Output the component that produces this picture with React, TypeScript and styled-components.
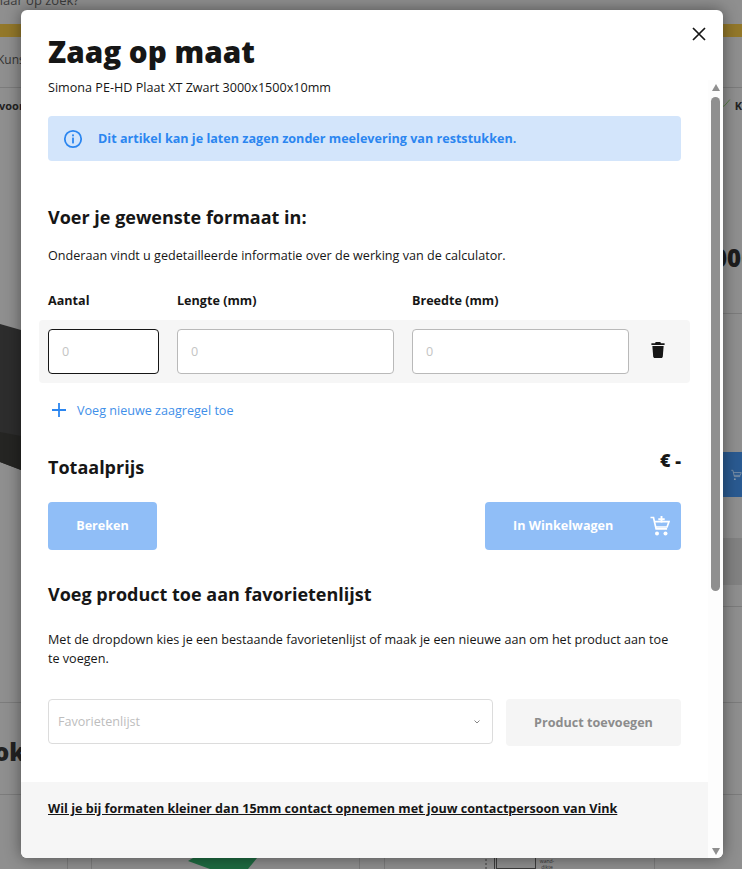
import { createGlobalStyle, styled } from "styled-components";

const GlobalStyle = createGlobalStyle`
  html, body {
    margin: 0;
    padding: 0;
    height: 100%;
    overflow: hidden;
  }
  body {
    font-family: "Open Sans", "Liberation Sans", sans-serif;
    color: #161616;
  }
`;

export default function App() {
  return (
    <>
      <GlobalStyle />
      <Page>
        <BackPage />
        <Modal>
          <Header>
            <Title>Zaag op maat</Title>
            <Subtitle>Simona PE-HD Plaat XT Zwart 3000x1500x10mm</Subtitle>
            <CloseBtn aria-label="Sluiten">
              <svg width="14" height="14" viewBox="0 0 14 14">
                <path d="M1 1l12 12M13 1L1 13" stroke="#161616" strokeWidth="1.7" />
              </svg>
            </CloseBtn>
          </Header>
          <Scroller>
            <Content>
              <InfoBox>
                <svg width="20" height="20" viewBox="0 0 20 20" fill="none">
                  <circle cx="10" cy="10" r="8.2" stroke="#2b86f0" strokeWidth="1.8" />
                  <rect x="9.1" y="8.6" width="1.8" height="5.8" fill="#2b86f0" />
                  <rect x="9.1" y="5.4" width="1.8" height="1.9" fill="#2b86f0" />
                </svg>
                <InfoText>Dit artikel kan je laten zagen zonder meelevering van reststukken.</InfoText>
              </InfoBox>
              <FormatTitle>Voer je gewenste formaat in:</FormatTitle>
              <Paragraph>Onderaan vindt u gedetailleerde informatie over de werking van de calculator.</Paragraph>
              <LabelRow>
                <Label $w={129}>Aantal</Label>
                <Label $w={235}>Lengte (mm)</Label>
                <Label $w={200}>Breedte (mm)</Label>
              </LabelRow>
              <SawRow>
                <Field $w={111} $active placeholder="0" />
                <Field $w={217} placeholder="0" />
                <Field $w={217} placeholder="0" />
                <TrashBtn aria-label="Verwijderen">
                  <svg width="14" height="16" viewBox="0 0 14 17">
                    <path d="M4.5 0h5l.6 1.2H14v1.9H0V1.2h3.9z" fill="#161616" />
                    <path d="M1 4.2h12L12.1 15.4c-.1.9-.7 1.6-1.6 1.6h-7c-.9 0-1.5-.7-1.6-1.6z" fill="#161616" />
                  </svg>
                </TrashBtn>
              </SawRow>
              <AddLine>
                <svg width="14" height="14" viewBox="0 0 14 14">
                  <path d="M7 0v14M0 7h14" stroke="#2b86f0" strokeWidth="1.8" />
                </svg>
                <AddText>Voeg nieuwe zaagregel toe</AddText>
              </AddLine>
              <TotalRow>
                <TotalLabel>Totaalprijs</TotalLabel>
                <TotalPrice>€ -</TotalPrice>
              </TotalRow>
              <ButtonRow>
                <BlueButton $w={109}>Bereken</BlueButton>
                <CartButton>
                  <span>In Winkelwagen</span>
                  <svg width="20" height="20" viewBox="0 0 20 20" fill="none">
                    <path d="M0.5 1.5h3l2.6 11.4h11" stroke="#fff" strokeWidth="1.7" />
                    <path d="M4.6 5.6h14.400l-1.900 5.400H5.700" stroke="#fff" strokeWidth="1.7" />
                    <path d="M11.500 0v6.500M8.300 3.200h6.400" stroke="#fff" strokeWidth="1.9" />
                    <circle cx="7" cy="17.500" r="2" fill="#fff" />
                    <circle cx="15.500" cy="17.500" r="2" fill="#fff" />
                  </svg>
                </CartButton>
              </ButtonRow>
              <FavTitle>Voeg product toe aan favorietenlijst</FavTitle>
              <FavParagraph>
                Met de dropdown kies je een bestaande favorietenlijst of maak je een nieuwe aan om het product aan toe te voegen.
              </FavParagraph>
              <FavRow>
                <SelectBox>
                  <SelectText>Favorietenlijst</SelectText>
                  <svg width="6" height="4" viewBox="0 0 6 4" fill="none">
                    <path d="M.5.5L3 3 5.500.5" stroke="#777" strokeWidth="0.9" />
                  </svg>
                </SelectBox>
                <GreyButton>Product toevoegen</GreyButton>
              </FavRow>
            </Content>
            <Footer>
              <FooterLink>Wil je bij formaten kleiner dan 15mm contact opnemen met jouw contactpersoon van Vink</FooterLink>
            </Footer>
          </Scroller>
          <ScrollTrack>
            <ArrowUp />
            <Thumb />
            <ArrowDown />
          </ScrollTrack>
        </Modal>
      </Page>
    </>
  );
}

// the dimmed shop page behind the dialog, only its edges show
function BackPage() {
  return (
    <Behind>
      <SearchRow>
        <BackSearch>naar op zoek?</BackSearch>
      </SearchRow>
      <GoldBar />
      <NavRow>
        <BackNav>Kunst</BackNav>
      </NavRow>
      <BackColumns>
        <BackLeft>
          <BackUsp>voor</BackUsp>
          <svg width="21" height="170" viewBox="0 0 21 170">
            <polygon points="0,0 21,6 21,146 0,138" fill="#2d2d2d" />
            <polygon points="0,108 21,112 21,146 0,138" fill="#252523" />
          </svg>
        </BackLeft>
        <BackRight>
          <UspRight>
            <svg width="9" height="10" viewBox="0 0 9 10">
              <path d="M0 9l2-1 6-7" stroke="#4d7a3a" strokeWidth="1" fill="none" />
            </svg>
            <BackK>K</BackK>
          </UspRight>
          <PriceCell>
            <BackBig>000</BackBig>
          </PriceCell>
          <BuyCell>
            <BackBlue>
              <svg width="18" height="18" viewBox="0 0 20 20" fill="none">
                <path d="M0.500 1.500h3l2.600 11.400h10.600M4.600 5.600h14l-1.700 5H5.700" stroke="#8a9aab" strokeWidth="1.400" />
                <circle cx="7" cy="17.500" r="1.800" fill="#8a9aab" />
              </svg>
            </BackBlue>
            <BackBand />
          </BuyCell>
        </BackRight>
      </BackColumns>
      <HeadingRow>
        <BackHeading>ok</BackHeading>
      </HeadingRow>
      <BackGap />
      <BottomRow>
        <BottomCell $w={67} $plain />
        <BottomCell $w={24} />
        <BottomCell $w={268}>
          <GreenShape width="70" height="11" viewBox="0 0 70 11">
            <polygon points="0,3 5,0 69,0 60,11 22,11" fill="#1e6b41" />
          </GreenShape>
        </BottomCell>
        <BottomCell $w={25} />
        <BottomCell $w={270}>
          <DrawingWrap>
            <svg width="51" height="11" viewBox="0 0 51 11" fill="none">
              <path d="M1 1v2M1 5v2M1 9v2M9.500 0v11M11.500 0v11M12 10.500h38M50.500 0v11" stroke="#3c3c3c" />
            </svg>
            <DrawingNote>wand-<br />dikte</DrawingNote>
          </DrawingWrap>
        </BottomCell>
        <BottomCell $w={88} />
      </BottomRow>
    </Behind>
  );
}

const Page = styled.div`
  position: relative;
  width: 742px;
  height: 869px;
  overflow: hidden;
  padding: 10px 19px 11px 21px;
  box-sizing: border-box;
`;

const Behind = styled.div`
  position: absolute;
  inset: 0;
  display: flex;
  flex-direction: column;
  background: #8f8f8f;
  overflow: hidden;
`;

const SearchRow = styled.div`
  height: 24px;
  flex: none;
`;

const BackSearch = styled.span`
  display: block;
  margin: -9px 0 0 -5px;
  font-size: 13px;
  line-height: 18px;
  color: #3b3b3b;
`;

const GoldBar = styled.div`
  height: 13px;
  flex: none;
  background: #93782a;
`;

const NavRow = styled.div`
  box-sizing: border-box;
  height: 51px;
  flex: none;
  padding: 14px 0 0;
  border-bottom: 1px solid #7c7c7c;
`;

const BackNav = styled.span`
  display: block;
  margin-left: -3px;
  font-size: 12px;
  color: #333;
`;

const BackColumns = styled.div`
  display: flex;
  justify-content: space-between;
  box-sizing: border-box;
  height: 615px;
  flex: none;
  border-bottom: 1px solid #7c7c7c;
`;

const BackLeft = styled.div`
  display: flex;
  flex-direction: column;
  width: 21px;
`;

const BackUsp = styled.span`
  height: 236px;
  margin: 10px 0 -10px -1px;
  font-size: 11px;
  line-height: 15px;
  font-weight: 700;
  color: #222;
`;

const BackRight = styled.div`
  display: flex;
  flex-direction: column;
  width: 19px;
`;

const UspRight = styled.div`
  display: flex;
  align-items: flex-start;
  gap: 4px;
  height: 150px;
  padding-top: 10px;
  box-sizing: border-box;
`;

const BackK = styled.span`
  font-size: 11px;
  line-height: 15px;
  font-weight: 700;
  color: #222;
`;

const PriceCell = styled.div`
  box-sizing: border-box;
  height: 76px;
  border-bottom: 1px solid #7c7c7c;
`;

const BackBig = styled.span`
  display: block;
  margin-left: -10px;
  font-size: 24px;
  line-height: 40px;
  font-weight: 800;
  color: #1d1d1d;
`;

const BuyCell = styled.div`
  box-sizing: border-box;
  height: 293px;
  padding-top: 138px;
  border-bottom: 1px solid #7c7c7c;
`;

const BackBlue = styled.div`
  display: flex;
  align-items: center;
  height: 45px;
  padding-left: 8px;
  background: #2a5a91;
`;

const BackBand = styled.div`
  height: 47px;
  margin-top: 41px;
  background: #828282;
`;

const HeadingRow = styled.div`
  box-sizing: border-box;
  height: 92px;
  flex: none;
  padding-top: 33px;
  border-bottom: 1px solid #7c7c7c;
`;

const BackHeading = styled.span`
  display: block;
  margin-left: -6px;
  font-size: 24px;
  line-height: 32px;
  font-weight: 800;
  color: #222;
`;

const BackGap = styled.div`
  flex: 1;
`;

const BottomRow = styled.div`
  display: flex;
  height: 11px;
  flex: none;
`;

const BottomCell = styled.div<{ $w: number; $plain?: boolean }>`
  box-sizing: border-box;
  display: flex;
  justify-content: center;
  width: ${(p) => p.$w}px;
  border-left: ${(p) => (p.$plain ? "0" : "1px solid #7c7c7c")};
`;

const GreenShape = styled.svg`
  margin-right: 6px;
`;

const DrawingWrap = styled.div`
  display: flex;
  gap: 4px;
`;

const DrawingNote = styled.span`
  font-size: 5px;
  line-height: 6px;
  text-align: center;
  color: #333;
`;

const Modal = styled.div`
  position: relative;
  display: flex;
  flex-direction: column;
  width: 702px;
  height: 848px;
  background: #fff;
  border-radius: 6px;
  overflow: hidden;
  box-shadow: 0 0 16px rgba(0, 0, 0, 0.45);
`;

const Header = styled.div`
  position: relative;
  height: 70px;
  padding: 23px 27px 0;
  flex: none;
`;

const Title = styled.h1`
  margin: 0;
  font-size: 29.7px;
  line-height: 38px;
  font-weight: 800;
`;

const Subtitle = styled.p`
  margin: 8px 0 0;
  font-size: 12.6px;
  line-height: 18px;
`;

const CloseBtn = styled.button`
  position: absolute;
  top: 17px;
  right: 17px;
  padding: 0;
  border: 0;
  background: none;
  display: flex;
`;

const Scroller = styled.div`
  display: flex;
  flex-direction: column;
  flex: 1;
  width: 687px;
`;

const Content = styled.div`
  flex: 1;
  padding: 13px 27px 0;
`;

const InfoBox = styled.div`
  display: flex;
  align-items: center;
  gap: 15px;
  height: 45px;
  padding-left: 15px;
  background: #d3e5fb;
  border-radius: 4px;
`;

const InfoText = styled.span`
  font-size: 12.6px;
  font-weight: 700;
  color: #2b86f0;
`;

const FormatTitle = styled.h2`
  margin: 44px 0 0;
  font-size: 18px;
  line-height: 24px;
  font-weight: 700;
`;

const Paragraph = styled.p`
  margin: 18px 0 0;
  font-size: 12.6px;
  line-height: 18px;
`;

const LabelRow = styled.div`
  display: flex;
  margin-top: 27px;
`;

const Label = styled.span<{ $w: number }>`
  width: ${(p) => p.$w}px;
  font-size: 12.6px;
  line-height: 18px;
  font-weight: 700;
`;

const SawRow = styled.div`
  display: flex;
  align-items: center;
  gap: 18px;
  height: 63px;
  margin: 10px -9px 0 -9px;
  padding: 0 9px;
  background: #f6f6f6;
  border-radius: 4px;
`;

const Field = styled.input<{ $w: number; $active?: boolean }>`
  box-sizing: border-box;
  width: ${(p) => p.$w}px;
  height: 45px;
  padding: 0 13px;
  border: 1px solid ${(p) => (p.$active ? "#161616" : "#b9b9b9")};
  border-radius: 4px;
  background: #fff;
  font: 12.6px "Open Sans", sans-serif;
  &::placeholder {
    color: #c4c4c4;
  }
`;

const TrashBtn = styled.button`
  margin: -3px 0 0 4px;
  padding: 0;
  border: 0;
  background: none;
  display: flex;
`;

const AddLine = styled.div`
  display: flex;
  align-items: center;
  gap: 11px;
  margin: 15px 0 0 4px;
  height: 24px;
`;

const AddText = styled.span`
  font-size: 12.6px;
  color: #3f8fe9;
`;

const TotalRow = styled.div`
  display: flex;
  justify-content: space-between;
  align-items: flex-start;
  margin-top: 33px;
`;

const TotalLabel = styled.span`
  font-size: 18px;
  line-height: 24px;
  font-weight: 700;
`;

const TotalPrice = styled.span`
  font-size: 18px;
  line-height: 22px;
  font-weight: 800;
  margin-top: -6px;
`;

const ButtonRow = styled.div`
  display: flex;
  justify-content: space-between;
  margin-top: 23px;
`;

const BlueButton = styled.div<{ $w: number }>`
  display: flex;
  align-items: center;
  justify-content: center;
  box-sizing: border-box;
  width: ${(p) => p.$w}px;
  height: 48px;
  padding-bottom: 1px;
  background: #90bef7;
  color: #fff;
  border-radius: 4px;
  font-size: 12.6px;
  font-weight: 700;
`;

const CartButton = styled(BlueButton).attrs({ $w: 196 })`
  justify-content: space-between;
  padding: 0 11px 1px 28px;
`;

const FavTitle = styled.h2`
  margin: 32px 0 0;
  font-size: 18px;
  line-height: 24px;
  font-weight: 700;
`;

const FavParagraph = styled.p`
  margin: 24px 0 0;
  font-size: 12.6px;
  line-height: 19px;
`;

const FavRow = styled.div`
  display: flex;
  justify-content: space-between;
  margin-top: 31px;
`;

const SelectBox = styled.div`
  box-sizing: border-box;
  display: flex;
  align-items: center;
  justify-content: space-between;
  width: 445px;
  height: 45px;
  padding: 0 12px 0 9px;
  border: 1px solid #dcdcdc;
  border-radius: 4px;
`;

const SelectText = styled.span`
  font-size: 12.6px;
  color: #bdbdbd;
`;

const GreyButton = styled.div`
  display: flex;
  align-items: center;
  justify-content: center;
  width: 175px;
  height: 47px;
  background: #f5f5f5;
  border-radius: 4px;
  color: #8c8c8c;
  font-size: 12.6px;
  font-weight: 700;
`;

const Footer = styled.div`
  height: 76px;
  padding: 14px 27px 0;
  box-sizing: border-box;
  background: #f6f6f6;
`;

const FooterLink = styled.a`
  font-size: 12.6px;
  line-height: 18px;
  font-weight: 700;
  color: #161616;
  text-decoration: underline;
`;

const ScrollTrack = styled.div`
  position: absolute;
  right: 0;
  top: 70px;
  bottom: 0;
  display: flex;
  flex-direction: column;
  align-items: center;
  width: 15px;
  padding: 4px 0 3px;
  box-sizing: border-box;
  background: #fdfdfd;
`;

const Thumb = styled.div`
  width: 9px;
  height: 494px;
  margin: 6px 0 auto;
  background: #8f8f8f;
  border-radius: 5px;
`;

const ArrowUp = styled.div`
  width: 0;
  height: 0;
  border-left: 4.5px solid transparent;
  border-right: 4.5px solid transparent;
  border-bottom: 7px solid #8f8f8f;
`;

const ArrowDown = styled(ArrowUp)`
  border-bottom: 0;
  border-top: 7px solid #8f8f8f;
`;
